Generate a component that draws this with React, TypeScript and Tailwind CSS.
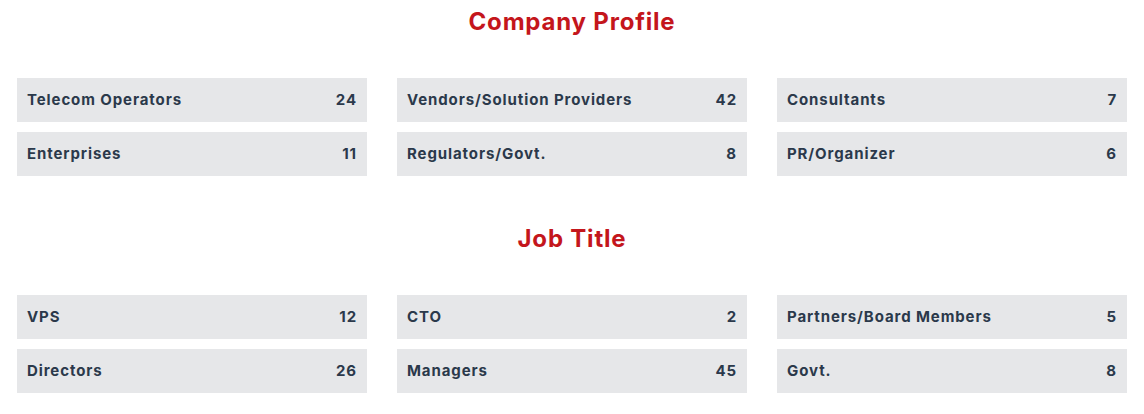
const companyProfile = [
  { label: 'Telecom Operators', count: 24 },
  { label: 'Vendors/Solution Providers', count: 42 },
  { label: 'Consultants', count: 7 },
  { label: 'Enterprises', count: 11 },
  { label: 'Regulators/Govt.', count: 8 },
  { label: 'PR/Organizer', count: 6 },
]

const jobTitle = [
  { label: 'VPS', count: 12 },
  { label: 'CTO', count: 2 },
  { label: 'Partners/Board Members', count: 5 },
  { label: 'Directors', count: 26 },
  { label: 'Managers', count: 45 },
  { label: 'Govt.', count: 8 },
]

type Item = { label: string; count: number }

function StatSection({ title, items, className }: { title: string; items: Item[]; className?: string }) {
  return (
    <section className={className}>
      <h2 className="text-center text-[24px] leading-[36px] font-bold tracking-[0.8px] text-[#c4161c]">{title}</h2>
      <div className="mt-[38px] grid grid-cols-3 gap-x-[30px] gap-y-[10px] px-[17px]">
        {items.map((item) => (
          <div
            key={item.label}
            className="flex h-[44px] items-center justify-between bg-[#e6e7e9] pl-[10px] pr-[10px] text-[15px] font-bold tracking-[0.9px] text-[#2b394b]"
          >
            <span>{item.label}</span>
            <span>{item.count}</span>
          </div>
        ))}
      </div>
    </section>
  )
}

export default function App() {
  return (
    <div className="min-h-[414px] bg-white pt-[4px] font-['Inter',sans-serif]">
      <StatSection title="Company Profile" items={companyProfile} />
      <StatSection title="Job Title" items={jobTitle} className="mt-[45px]" />
    </div>
  )
}
